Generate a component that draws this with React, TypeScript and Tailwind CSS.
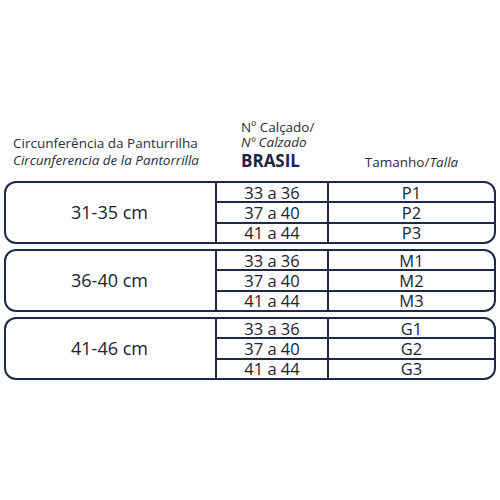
import React from 'react';

const groups = [
  { range: '31-35 cm', sizes: ['P1', 'P2', 'P3'] },
  { range: '36-40 cm', sizes: ['M1', 'M2', 'M3'] },
  { range: '41-46 cm', sizes: ['G1', 'G2', 'G3'] },
];

const shoes = ['33 a 36', '37 a 40', '41 a 44'];

const App = () => {
  return (
    <div
      className="w-[500px] h-[500px] bg-white text-[#1c2130] px-[4px] pt-[120px]"
      style={{ fontFamily: '"Open Sans", "Liberation Sans", sans-serif' }}
    >
      {/* Header */}
      <div className="flex h-[53px]">
        <div className="w-[211px] flex flex-col justify-end pl-[9px] pb-[4px] text-[13.5px] leading-[17px] text-[#2a2e38]">
          <span>Circunferência da Panturrilha</span>
          <span className="italic">Circunferencia de la Pantorrilla</span>
        </div>
        <div className="w-[112px] flex flex-col pl-[26px] text-[13.5px] leading-[15px] text-[#2a2e38] whitespace-nowrap">
          <span>Nº Calçado/</span>
          <span className="italic">Nº Calzado</span>
          <span className="text-[17px] leading-[22px] font-bold text-[#1c2440]">BRASIL</span>
        </div>
        <div className="flex-1 flex items-end justify-center pb-[1px] text-[13.5px] leading-[20px] text-[#2a2e38]">
          <span>
            Tamanho/<span className="italic">Talla</span>
          </span>
        </div>
      </div>

      {/* Table */}
      <div className="mt-[8px] flex flex-col gap-[5px]">
        {groups.map((g) => (
          <div
            key={g.range}
            className="flex h-[63px] border-2 border-[#1d2947] rounded-[12px] overflow-hidden"
          >
            <div className="w-[211px] border-r-2 border-[#1d2947] flex items-center justify-center text-[18px] pr-[2px]">
              {g.range}
            </div>
            <div className="flex-1 flex flex-col">
              {shoes.map((s, i) => (
                <div
                  key={s}
                  className={`flex-1 flex ${i > 0 ? 'border-t-2 border-[#1d2947]' : ''}`}
                >
                  <div className="w-[112px] border-r-2 border-[#1d2947] flex items-center justify-center text-[16.5px] leading-[17px]">
                    {s}
                  </div>
                  <div className="flex-1 flex items-center justify-center text-[16.5px] leading-[17px]">
                    {g.sizes[i]}
                  </div>
                </div>
              ))}
            </div>
          </div>
        ))}
      </div>
    </div>
  );
};

export default App;
